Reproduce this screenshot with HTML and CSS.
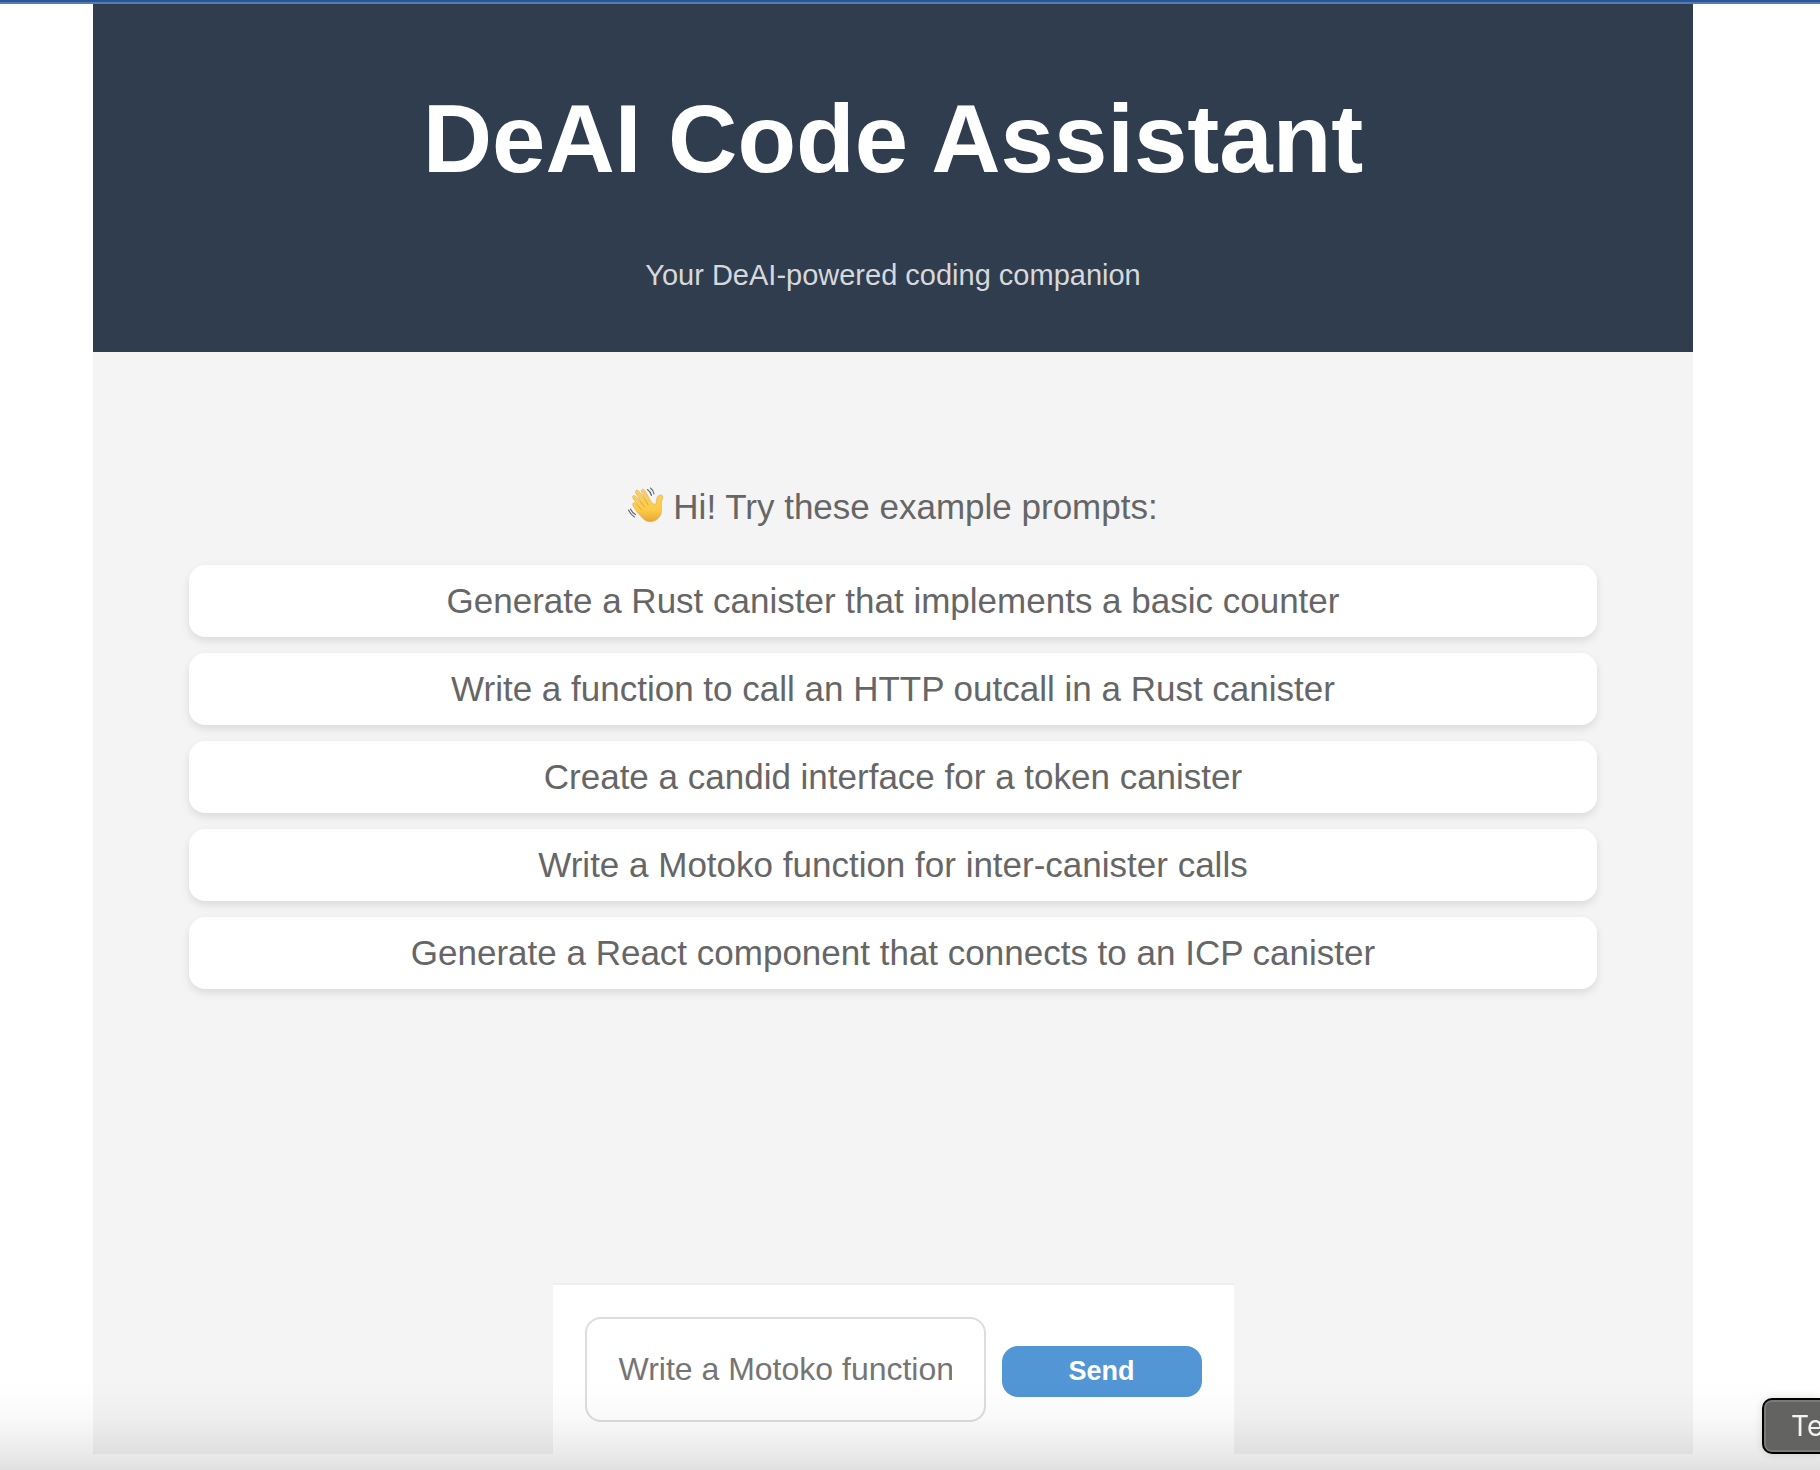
FILE: index.html
```html
<!DOCTYPE html>
<html lang="en">
<head>
  <meta charset="utf-8">
  <meta name="viewport" content="width=device-width, initial-scale=1">
  <title>DeAI Code Assistant</title>
  <link rel="stylesheet" href="styles.css">
</head>
<body>
  <div class="app">
    <header class="app-header">
      <h1 class="app-title">DeAI Code Assistant</h1>
      <p class="app-tagline">Your DeAI-powered coding companion</p>
    </header>
    <main class="chat">
      <p class="greeting">
        <svg class="wave" viewBox="0 0 36 36" aria-hidden="true">
          <defs>
            <linearGradient id="skin" x1="0" y1="0" x2="0" y2="1">
              <stop offset="0" stop-color="#f8d06c"/>
              <stop offset="0.65" stop-color="#fccb45"/>
              <stop offset="1" stop-color="#e8a63a"/>
            </linearGradient>
          </defs>
          <path fill="url(#skin)" stroke="#dba043" stroke-width=".5" d="M16 32.500C13 29.500 8 24.500 5.200 19C3.700 16.300 5.800 14.600 7.700 16.500L11 20L5 11.500C3.600 9 5.800 7.300 7.700 9.300L13.500 16L7.800 6C6.700 3.300 9.200 2 10.900 4.300L17.500 13.500L13.500 5C12.400 2.300 15.200 1 16.700 3.500L22.500 13.500C23.700 15.800 26 17.800 27.500 17.300C28.600 16 28 13 29 10.500C30 8 33 7.300 34.500 8.700C35.600 10 33.800 12.500 33.500 15.500C33 20 34.500 25 32 29C28.500 35 21 36.500 16 32.500Z"/>
          <path fill="none" stroke="#d99b39" stroke-width=".8" stroke-linecap="round" d="M11 20L13.500 23M13.500 16L16.500 20M17.500 13.500L20 17.500"/>
          <path fill="none" stroke="#5f6468" stroke-width="1.100" stroke-linecap="round" d="M19.500 2.500Q22.500 4.500 23.500 8.500M22.500 1Q25.300 3 26 7M.5 23Q2.500 27.500 6.500 30M2.500 22Q4 25.500 7.500 27.500"/>
        </svg>
        Hi! Try these example prompts:
      </p>
      <ul class="prompts">
        <li><button type="button" class="prompt">Generate a Rust canister that implements a basic counter</button></li>
        <li><button type="button" class="prompt">Write a function to call an HTTP outcall in a Rust canister</button></li>
        <li><button type="button" class="prompt">Create a candid interface for a token canister</button></li>
        <li><button type="button" class="prompt">Write a Motoko function for inter-canister calls</button></li>
        <li><button type="button" class="prompt">Generate a React component that connects to an ICP canister</button></li>
      </ul>
    </main>
    <form class="composer">
      <input class="composer-input" type="text" aria-label="Message" placeholder="Write a Motoko function">
      <button type="submit" class="composer-send">Send</button>
    </form>
  </div>
  <div class="fade"></div>
  <div class="hint">Te</div>
</body>
</html>
```
FILE: styles.css
```css
* {
  box-sizing: border-box;
}

body {
  display: flex;
  flex-direction: column;
  min-height: 100vh;
  margin: 0;
  padding: 0 34px 16px 0;
  background: #fff;
  color: #666;
  font-family: "Liberation Sans", Arial, sans-serif;
  overflow-x: hidden;
}

body::before {
  content: "";
  width: 100vw;
  height: 2px;
  border-bottom: 2px solid #557db3;
  background: #28559a;
}

.app {
  display: flex;
  flex: 1;
  flex-direction: column;
  width: 100%;
  max-width: 1600px;
  margin: 0 auto;
  background: #f4f4f4;
}

.app-header {
  padding: 80px 32px 60px;
  background: #303d4f;
  text-align: center;
}

.app-title {
  margin: 0 0 64px;
  color: #fff;
  font-size: 96px;
  line-height: 110px;
}

.app-tagline {
  margin: 0;
  color: #d6d8dc;
  font-size: 29px;
  line-height: 34px;
}

.chat {
  flex: 1;
  padding: 132px 96px 96px;
}

.greeting {
  display: flex;
  justify-content: center;
  gap: 9px;
  margin: 0 0 36px;
  font-size: 35px;
  line-height: 45px;
}

.wave {
  width: 36px;
  height: 36px;
  margin-top: 3px;
}

.prompts {
  display: grid;
  gap: 16px;
  margin: 0;
  padding: 0;
  list-style: none;
}

.prompt {
  display: block;
  width: 100%;
  padding: 16px;
  border: 0;
  border-radius: 16px;
  background: #fff;
  box-shadow: 0 4px 8px rgba(0, 0, 0, 0.1);
  color: #666;
  font: inherit;
  font-size: 35px;
  line-height: 40px;
}

.composer {
  display: flex;
  align-items: baseline;
  align-self: center;
  gap: 16px;
  padding: 32px;
  border-top: 2px solid #eee;
  background: #fff;
}

.composer-input {
  width: 401px;
  height: 105px;
  padding: 32px;
  border: 2px solid #ddd;
  border-radius: 16px;
  background: #fff;
  font: inherit;
  font-size: 32px;
}

.composer-input::placeholder {
  color: #757575;
}

.composer-send {
  width: 200px;
  padding: 10px;
  border: 0;
  border-radius: 16px;
  background: #5296d6;
  color: #fff;
  font: inherit;
  font-size: 27px;
  font-weight: bold;
  line-height: 31px;
}

.fade {
  position: fixed;
  right: 0;
  bottom: 0;
  left: 0;
  height: 90px;
  background: linear-gradient(rgba(0, 0, 0, 0), rgba(0, 0, 0, 0.02) 40%, rgba(0, 0, 0, 0.08) 80%, rgba(0, 0, 0, 0.12));
  pointer-events: none;
}

.hint {
  position: fixed;
  right: 0;
  bottom: 16px;
  width: 58px;
  padding: 8px 0 8px 27px;
  border: 2px solid #000;
  border-right: 0;
  border-radius: 10px 0 0 10px;
  background: #636361;
  box-shadow: inset 2px 0 #7a7a78, inset 0 2px #7a7a78, inset 0 -2px #7a7a78, 0 0 8px rgba(0, 0, 0, 0.12);
  color: #f4f4f4;
  font-family: Inter, sans-serif;
  font-size: 28px;
  line-height: 36px;
  overflow: hidden;
}
```
